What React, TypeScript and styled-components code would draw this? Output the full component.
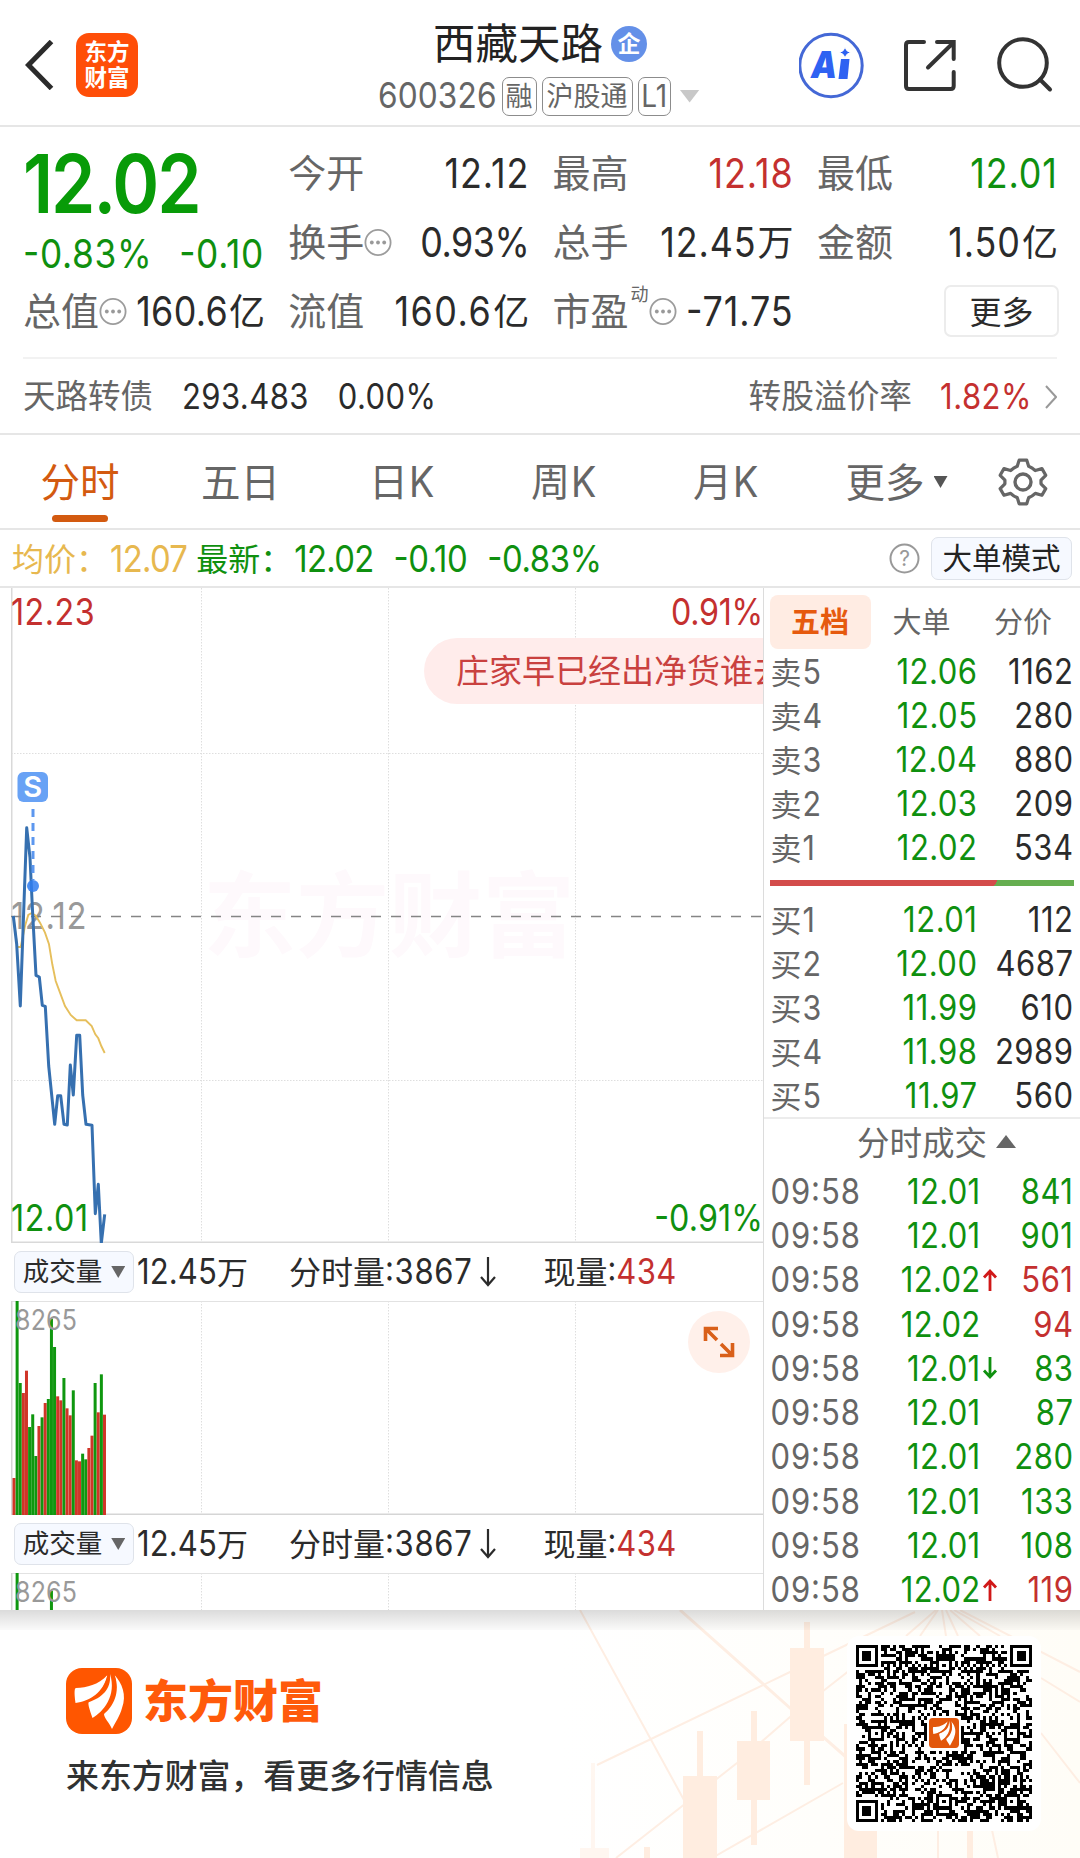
import React from "react";
import styled, { createGlobalStyle } from "styled-components";

const GREEN = "#0f900f";
const RED = "#c4302f";
const INK = "#2b2b2b";
const GREY = "#666";
const CJK = `"Noto Sans CJK SC", sans-serif`;

const Global = createGlobalStyle`
  * { box-sizing: border-box; }
  body { margin: 0; background: #fff; }
`;

const Page = styled.div`
  width: 1080px;
  height: 1858px;
  overflow: hidden;
  display: flex;
  flex-direction: column;
  background: #fff;
  font-family: ${CJK};
`;

/* Tall, slightly condensed numerals; $h is the height of a digit. */
const Num = styled.span<{ $h: number; $c?: string; $w?: number; $ls?: number }>`
  display: inline-block;
  font-family: Inter, sans-serif;
  font-size: ${(p) => (p.$h / 0.727) * 0.885}px;
  font-weight: ${(p) => p.$w ?? 400};
  font-feature-settings: "case";
  letter-spacing: ${(p) => p.$ls ?? 0.5}px;
  line-height: 1;
  transform: scaleY(1.13);
  color: ${(p) => p.$c ?? INK};
  white-space: pre;
`;

const Cn = styled.span<{ $s: number; $c?: string; $w?: number; $ls?: number }>`
  font-size: ${(p) => p.$s}px;
  color: ${(p) => p.$c ?? GREY};
  font-weight: ${(p) => p.$w ?? 400};
  letter-spacing: ${(p) => p.$ls ?? 0}px;
  line-height: 1;
  padding-bottom: 0.12em;
  white-space: nowrap;
`;

/* ---------- header ---------- */
const Header = styled.header`
  height: 127px;
  flex: none;
  display: grid;
  grid-template-columns: 378px 1fr 281px;
  border-bottom: 2px solid #e6e6e6;
`;
const HeaderLeft = styled.div`
  display: flex;
  align-items: center;
  gap: 22px;
  padding: 5px 0 0 24px;
`;
const AppLogo = styled.div`
  width: 62px;
  height: 64px;
  border-radius: 13px;
  background: #ff4e08;
  color: #fff;
  font-size: 22.5px;
  font-weight: 700;
  line-height: 26px;
  text-align: center;
  padding-top: 4px;
`;
const HeaderMid = styled.div`
  display: flex;
  flex-direction: column;
`;
const TitleRow = styled.div`
  display: flex;
  align-items: center;
  gap: 8px;
  height: 48px;
  margin: 20px 0 0 55px;
`;
const Badge = styled.span`
  width: 36px;
  height: 36px;
  border-radius: 50%;
  background: #6490e8;
  color: #fff;
  font-size: 23px;
  font-weight: 700;
  line-height: 33px;
  text-align: center;
`;
const CodeRow = styled.div`
  display: flex;
  align-items: center;
  gap: 5px;
  height: 40px;
  margin-top: 8px;
`;
const Tag = styled.span<{ $w: number }>`
  width: ${(p) => p.$w}px;
  height: 39px;
  border: 1.5px solid #8c8c8c;
  border-radius: 7px;
  display: flex;
  align-items: center;
  justify-content: center;
`;
const HeaderRight = styled.div`
  display: flex;
  align-items: center;
  padding-top: 4px;
`;
const Tri = styled.i<{ $w: number; $h: number; $c: string; $up?: boolean }>`
  display: block;
  width: ${(p) => p.$w}px;
  height: ${(p) => p.$h}px;
  background: ${(p) => p.$c};
  clip-path: ${(p) => (p.$up ? "polygon(50% 0, 100% 100%, 0 100%)" : "polygon(0 0, 100% 0, 50% 100%)")};
`;

/* ---------- quote ---------- */
const Quote = styled.section`
  height: 230px;
  flex: none;
  display: grid;
  grid-template-columns: 241px 240px 240px 240px;
  grid-auto-rows: 69px;
  column-gap: 24.3px;
  padding: 12px 23px 0 23px;
`;
const Price = styled.div`
  display: flex;
  flex-direction: column;
  grid-row: span 2;
`;
const PriceBig = styled.div`
  height: 92px;
  display: flex;
  align-items: center;
`;
const PriceChange = styled.div`
  height: 45px;
  display: flex;
  align-items: center;
  justify-content: space-between;
`;
const Cell = styled.div`
  height: 69px;
  display: flex;
  align-items: center;
`;
const Value = styled.span`
  margin-left: auto;
  margin-right: -1px;
  display: flex;
  align-items: center;
  gap: 1px;
`;
const Sup = styled.sup`
  align-self: flex-start;
  font-size: 18px;
  line-height: 18px;
  color: ${GREY};
  margin: 7px 0 0 2px;
`;
const MoreButton = styled.button`
  margin-left: auto;
  margin-right: -2px;
  margin-bottom: 2px;
  width: 115px;
  height: 52px;
  border: 2px solid #ececec;
  border-radius: 7px;
  background: #fff;
  font-family: inherit;
  padding: 0;
`;
const Bond = styled.section`
  flex: none;
  margin: 0 23px;
  height: 76px;
  border-top: 2px solid #f2f2f2;
  padding-top: 1px;
  display: flex;
  align-items: center;
`;
const Spacer = styled.span<{ $w?: number }>`
  ${(p) => (p.$w ? `width: ${p.$w}px; flex: none;` : "flex: 1;")}
`;

/* ---------- tabs ---------- */
const Tabs = styled.nav`
  height: 97px;
  flex: none;
  border-top: 2px solid #e6e6e6;
  border-bottom: 2px solid #e6e6e6;
  display: grid;
  grid-template-columns: 160px 161px 162px 162px 162px 1fr 114px;
`;
const Tab = styled.div`
  display: flex;
  flex-direction: column;
  align-items: center;
`;
const TabLabel = styled.div`
  height: 80px;
  padding-top: 14px;
  display: flex;
  align-items: center;
  gap: 9px;
`;
const Underline = styled.i`
  width: 56px;
  height: 7px;
  border-radius: 4px;
  background: #d35a10;
`;
const Info = styled.div`
  height: 58px;
  flex: none;
  border-bottom: 2px solid #e6e6e6;
  display: flex;
  align-items: center;
  padding: 1px 8px 0 12px;
`;
const SmallButton = styled.button<{ $w: number; $h: number }>`
  width: ${(p) => p.$w}px;
  height: ${(p) => p.$h}px;
  flex: none;
  border: 1.5px solid #dfe3ea;
  border-radius: 7px;
  background: #f6f9ff;
  font-family: inherit;
  padding: 0;
  display: flex;
  align-items: center;
  justify-content: center;
  gap: 9px;
`;

/* ---------- body ---------- */
const Body = styled.main`
  height: 1022px;
  flex: none;
  display: grid;
  grid-template-columns: 763px 317px;
  overflow: hidden;
`;
const ChartColumn = styled.div`
  height: 1022px;
  overflow: hidden;
`;
const ChartBox = styled.div<{ $h: number }>`
  position: relative;
  margin-left: 11px;
  height: ${(p) => p.$h}px;
  overflow: hidden;
  svg { display: block; position: relative; }
`;
const Corner = styled.span<{ $top: number; $left?: number; $right?: number }>`
  position: absolute;
  line-height: 0;
  top: ${(p) => p.$top}px;
  ${(p) => (p.$left !== undefined ? `left: ${p.$left}px;` : `right: ${p.$right}px;`)}
`;
const Watermark = styled.span`
  position: absolute;
  left: 192px;
  top: 270px;
  font-size: 93px;
  line-height: 104px;
  font-weight: 700;
  color: #fef9fc;
  white-space: nowrap;
`;
const Marquee = styled.div`
  position: absolute;
  top: 50px;
  left: 413px;
  width: 400px;
  height: 66px;
  padding: 1px 0 0 32px;
  border-radius: 33px;
  background: #ffeceb;
  display: flex;
  align-items: center;
`;
const VolumeHead = styled.div`
  height: 58px;
  display: flex;
  align-items: center;
  padding-left: 14px;
`;
const ExpandButton = styled.span`
  position: absolute;
  left: 677px;
  top: 10px;
  width: 62px;
  height: 62px;
  border-radius: 50%;
  background: #fff0ea;
  svg { margin: 15px; }
`;

/* ---------- order book ---------- */
const Side = styled.aside`
  border-left: 1.5px solid #dcdcdc;
  padding-left: 5.5px;
`;
const SideTabs = styled.div`
  display: grid;
  grid-template-columns: 101px 102px 101px;
  padding-top: 7px;
  height: 62px;
`;
const SideTab = styled.div<{ $on?: boolean }>`
  height: 54px;
  border-radius: 8px;
  background: ${(p) => (p.$on ? "#ffece3" : "transparent")};
  display: flex;
  align-items: center;
  justify-content: center;
`;
const BookRow = styled.div`
  height: 44px;
  display: grid;
  grid-template-columns: 70px 137px 96px;
  align-items: center;
  padding-left: 1px;
  & > :nth-child(n + 2) { justify-self: end; }
`;
const Level = styled.span`
  display: flex;
  align-items: center;
  gap: 1px;
`;
const Ratio = styled.div`
  display: flex;
  width: 304px;
  height: 6px;
  margin: 10px 0 12px;
  background: linear-gradient(120deg, #d34c4b 0 74%, #66ae50 74%);
`;
const DealsHead = styled.div`
  height: 52px;
  margin: -1px 0 0 -5.5px;
  padding: 0 0 2px 93px;
  border-top: 2px solid #ececec;
  display: flex;
  align-items: center;
  gap: 9px;
`;
const DealMark = styled(Tri)`
  margin-bottom: 3px;
`;
const DealRow = styled.div`
  height: 44.3px;
  display: grid;
  grid-template-columns: 89px 121px 18px 75px;
  align-items: center;
  padding-left: 1px;
  & > :nth-child(2), & > :nth-child(4) { justify-self: end; }
  & > :nth-child(3) { justify-self: center; }
`;

/* ---------- footer ---------- */
const Footer = styled.footer`
  position: relative;
  height: 248px;
  flex: none;
  display: flex;
  justify-content: space-between;
  background: #fff;
`;
const Backdrop = styled.svg`
  position: absolute;
  inset: 0;
`;
const Shade = styled.div`
  position: absolute;
  left: 0;
  top: 0;
  width: 100%;
  height: 20px;
  background: linear-gradient(rgba(0, 0, 0, 0.14), rgba(0, 0, 0, 0.02));
`;
const Brand = styled.div`
  position: relative;
  padding: 58px 0 0 66px;
`;
const BrandRow = styled.div`
  display: flex;
  align-items: center;
  gap: 11px;
  height: 66px;
  margin-bottom: 24px;
`;
const QrCard = styled.div`
  position: relative;
  margin: 26px 39px 0 0;
  width: 194px;
  height: 195px;
  padding: 9px;
  border-radius: 12px;
  background: #fff;
`;

/* ---------- drawings ---------- */
const MoreDots = () => (
  <svg width="28" height="29" viewBox="0 0 27 29" style={{ flex: "none" }}>
    <circle cx="13.5" cy="14.5" r="12.6" fill="none" stroke="#9c9c9c" strokeWidth="1.8" />
    {[7.3, 13.5, 19.7].map((x) => <circle key={x} cx={x} cy="14.5" r="1.9" fill="#999" />)}
  </svg>
);

const Feather = ({ size, color }: { size: number; color: string }) => (
  <svg width={size} height={size} viewBox="0 0 66 66">
    <rect width="66" height="66" rx={size > 40 ? 16 : 8} fill={color} />
    <g fill="#fff">
      <path d="M41.5 7 C32 17 21 19.5 10 20 C8.500 20 8 24 9.500 35 C24 33 37 25 41.500 7Z" />
      <path d="M44 6 C45.500 22 35 30 23 34 C21.500 35 23 40 26.500 50 C37 44 51 28 44 6Z" />
      <path d="M48.500 7 C56 15 61 27 56 40 C54 48 49 55 46 61 C43 54 38 50 38 46 C47 39 55 24 48.500 7Z" />
    </g>
    <g fill="none" stroke={color} strokeWidth="1.800">
      <path d="M42.500 6C40 22 30 31 18 34.500" />
      <path d="M47.500 6C53 24 45 40 32 48" />
    </g>
  </svg>
);

const Arrow = ({ up, color }: { up?: boolean; color: string }) => (
  <svg width="16" height="24" viewBox="0 0 16 24" style={{ display: "block" }}>
    <path
      d={up ? "M8 23V3M2 9.500L8 3L14 9.500" : "M8 1V21M2 14.500L8 21L14 14.500"}
      fill="none" stroke={color} strokeWidth="2.8"
    />
  </svg>
);

const px = (pts: number[][]) => pts.map(([x, y]) => `${(x / 3 - 11).toFixed(1)},${(y / 3 + 153).toFixed(1)}`).join(" ");
const pricePts = px([
  [40, 525], [50, 610], [61, 795], [80, 260], [90, 350], [98, 520], [108, 703], [118, 708], [127, 793], [136, 796],
  [146, 975], [164, 1150], [173, 1064], [182, 1064], [192, 1150], [202, 1152], [211, 972], [220, 1062], [230, 883],
  [239, 883], [248, 1062], [258, 1150], [276, 1153], [286, 1418], [295, 1330], [304, 1507], [314, 1420],
]);
const avgPts = px([
  [40, 525], [52, 618], [62, 618], [75, 555], [85, 522], [95, 516], [107, 524], [120, 545], [135, 575], [147, 610],
  [157, 670], [167, 720], [180, 755], [195, 795], [212, 822], [230, 838], [257, 838], [275, 855], [286, 880],
  [295, 892], [304, 915], [314, 936],
]);

const PriceChart = () => (
  <ChartBox $h={655}>
    <Watermark>东方财富</Watermark>
    <Corner $top={328} $left={0}><Num $h={27} $c="#999" $ls={0.5} style={{ marginTop: -17 }}>12.12</Num></Corner>
    <svg width="752" height="655">
      <path d="M190.500 0V655M377.500 0V655M564.500 0V655M0 165.500H752M0 492.500H752" stroke="#dedede" strokeDasharray="1.500 1.500" />
      <path d="M.75 0V654.250H752" fill="none" stroke="#d9d9d9" strokeWidth="1.500" />
      <path d="M0 328.500H752" stroke="#858585" strokeWidth="1.700" strokeDasharray="10 10" />
      <polyline points={avgPts} fill="none" stroke="#e6bf5c" strokeWidth="1.900" />
      <polyline points={pricePts} fill="none" stroke="#3670b0" strokeWidth="3" strokeLinejoin="round" />
      <path d="M22 221V292" stroke="#5c97ef" strokeWidth="3" strokeDasharray="8 6" />
      <circle cx="22" cy="298" r="6" fill="#2f7df0" opacity=".85" />
      <rect x="6.500" y="184" width="30.500" height="30" rx="6" fill="#68a2f5" />
      <text x="21.700" y="208.500" textAnchor="middle" fontFamily="Inter" fontWeight="600" fontSize="29" fill="#fff">S</text>
    </svg>
    <Corner $top={9} $left={0}><Num $h={26.500} $c={RED} $ls={0.500}>12.23</Num></Corner>
    <Corner $top={9} $right={0}><Num $h={26.500} $c={RED} $ls={-0.300}>0.91%</Num></Corner>
    <Corner $top={615} $left={0}><Num $h={26.500} $c={GREEN} $ls={0.600}>12.01</Num></Corner>
    <Corner $top={615} $right={0}><Num $h={26.500} $c={GREEN} $ls={0.100}>-0.91%</Num></Corner>
    <Marquee><Cn $s={33} $c="#c9413f">庄家早已经出净货谁去</Cn></Marquee>
  </ChartBox>
);

const BARS: [number, string][] = [
  [743, "r"], [212, "g"], [458, "g"], [488, "r"], [421, "r"], [590, "g"], [552, "g"], [677, "g"], [587, "r"], [561, "g"],
  [518, "r"], [506, "g"], [265, "g"], [350, "g"], [498, "r"], [510, "r"], [443, "g"], [534, "r"], [555, "r"], [480, "g"],
  [690, "r"], [693, "r"], [670, "g"], [687, "g"], [653, "r"], [616, "r"], [458, "g"], [546, "r"], [432, "g"], [553, "r"],
];

const VolumeChart = ({ expand }: { expand?: boolean }) => (
  <ChartBox $h={214}>
    <svg width="752" height="214">
      <path d="M190.500 0V214M377.500 0V214M564.500 0V214" stroke="#dedede" strokeDasharray="1.500 1.500" />
      <path d="M0 .5H752" stroke="#e2e2e2" />
      <path d="M.75 0V213.250H752" fill="none" stroke="#d5d5d5" strokeWidth="1.500" />
      {BARS.map(([top, c], i) => (
        <rect key={i} x={1.500 + i * 3.120} y={(top - 212) / 3} width={3} height={(855 - top) / 3} fill={c === "g" ? "#0f970f" : "#d03528"} />
      ))}
    </svg>
    <Corner $top={7} $left={4}><Num $h={20.500} $c="#999" $ls={0.200}>8265</Num></Corner>
    {expand && (
      <ExpandButton>
        <svg width="32" height="32" fill="none" stroke="#d9601a" strokeWidth="3.600">
          <path d="M2.500 15V2.500H15M2.500 2.500L14 14M29.500 17V29.500H17M29.500 29.500L18 18" />
        </svg>
      </ExpandButton>
    )}
  </ChartBox>
);

const VolumeHeader = () => (
  <VolumeHead>
    <SmallButton $w={120} $h={42}>
      <Cn $s={26.500} $c={INK}>成交量</Cn>
      <Tri $w={14} $h={12} $c="#666" />
    </SmallButton>
    <Spacer $w={3} />
    <Num $h={25.500} $ls={0.100}>12.45</Num><Cn $s={31} $c={INK}>万</Cn>
    <Spacer $w={41} />
    <Cn $s={32} $c={INK}>分时量</Cn><Num $h={25.500} $ls={0.700}>:3867</Num>
    <Spacer $w={6} />
    <svg width="18" height="32" fill="none" stroke={INK} strokeWidth="2.200"><path d="M9 1V29M2 21L9 29L16 21" /></svg>
    <Spacer $w={47} />
    <Cn $s={32} $c={INK}>现量</Cn><Num $h={25} $ls={0}>:</Num><Num $h={25.500} $c={RED} $ls={0.300}>434</Num>
  </VolumeHead>
);

const N = 57;
const inSquare = (x: number, y: number, cx: number, cy: number) => Math.max(Math.abs(x - cx), Math.abs(y - cy));
function moduleOn(x: number, y: number, rnd: number): boolean {
  for (const [cx, cy] of [[3, 3], [53, 3], [3, 53]]) {
    const d = inSquare(x, y, cx, cy);
    if (d <= 4) return d === 3 || d <= 1;
  }
  for (const [cx, cy] of [[28, 6], [6, 28], [50, 28], [28, 50], [50, 50]]) {
    const d = inSquare(x, y, cx, cy);
    if (d <= 2) return d !== 1;
  }
  if (inSquare(x, y, 28, 28) <= 5) return false;
  if (x === 6) return y % 2 === 0;
  if (y === 6) return x % 2 === 0;
  return rnd < 0.5;
}
const qrPath = (() => {
  let seed = 20231;
  let d = "";
  for (let y = 0; y < N; y++)
    for (let x = 0; x < N; x++) {
      seed = (seed * 1103515245 + 12345) % 2147483648;
      if (moduleOn(x, y, seed / 2147483648)) d += `M${x} ${y}h1v1h-1z`;
    }
  return d;
})();

const QrLogo = styled.span`
  position: absolute;
  left: 82px;
  top: 82px;
  width: 30px;
  height: 30px;
`;

const FooterArt = () => (
  <Backdrop width="1080" height="248">
    <defs>
      <linearGradient id="wash" x1="0" x2="1"><stop offset="0" stopColor="#fff" /><stop offset="1" stopColor="#fffdf7" /></linearGradient>
    </defs>
    <rect x="560" width="520" height="248" fill="url(#wash)" />
    <g stroke="#feeee3" strokeWidth="2" fill="none">
      <path d="M580 0L684 190M597 155L790 62L915 2" />
      <path d="M680 0L790 98L846 147" strokeWidth="3" />
      <path d="M616 248L681 197L737 153L790 107L850 60M712 248L843 173" />
      <path d="M960 0L1080 62M1041 68L1080 92M1041 123L1080 173M936 0L906 26M938 0L920 26M942 0L946 26M946 0L958 26M950 0L980 26M954 0L1000 26M938 220V248M992 220L998 248" />
    </g>
    <g fill="#ffede0">
      <rect x="804" y="12" width="6" height="163" /><rect x="790" y="38" width="34" height="93" />
      <rect x="751" y="101" width="6" height="134" /><rect x="737" y="131" width="33" height="59" />
      <rect x="697" y="121" width="6" height="50" /><rect x="683" y="166" width="34" height="82" />
      <rect x="844" y="114" width="33" height="134" /><rect x="644" y="237" width="6" height="11" /><rect x="967" y="215" width="6" height="33" />
      <g opacity=".45"><rect x="591" y="153" width="4" height="85" /><rect x="580" y="238" width="29" height="10" /></g>
    </g>
  </Backdrop>
);

const Stat = ({ label, value, unit, color, dots, sup, ls }: { label: string; value: string; unit?: string; color?: string; dots?: boolean; sup?: string; ls?: number }) => (
  <Cell>
    <Cn $s={38}>{label}</Cn>
    {sup && <Sup>{sup}</Sup>}
    {dots && <MoreDots />}
    <Value>
      <Num $h={29.500} $c={color} $ls={ls ?? 0.9}>{value}</Num>
      {unit && <Cn $s={36} $c={INK}>{unit}</Cn>}
    </Value>
  </Cell>
);

const SELL = [["5", "12.06", "1162"], ["4", "12.05", "280"], ["3", "12.04", "880"], ["2", "12.03", "209"], ["1", "12.02", "534"]];
const BUY = [["1", "12.01", "112"], ["2", "12.00", "4687"], ["3", "11.99", "610"], ["4", "11.98", "2989"], ["5", "11.97", "560"]];
const DEALS: [string, string, string, string][] = [
  ["12.01", "", "841", GREEN], ["12.01", "", "901", GREEN], ["12.02", "up", "561", RED], ["12.02", "", "94", RED],
  ["12.01", "down", "83", GREEN], ["12.01", "", "87", GREEN], ["12.01", "", "280", GREEN], ["12.01", "", "133", GREEN],
  ["12.01", "", "108", GREEN], ["12.02", "up", "119", RED],
];

const Book = ({ side, rows }: { side: string; rows: string[][] }) => (
  <>
    {rows.map(([n, price, vol]) => (
      <BookRow key={n}>
        <Level><Cn $s={31}>{side}</Cn><Num $h={25} $c={GREY}>{n}</Num></Level>
        <Num $h={25.500} $c={GREEN}>{price}</Num>
        <Num $h={25.500}>{vol}</Num>
      </BookRow>
    ))}
  </>
);

const KTab = ({ c }: { c: string }) => (
  <Tab><TabLabel style={{ gap: 1 }}><Cn $s={39}>{c}</Cn><Num $h={31} $c={GREY}>K</Num></TabLabel></Tab>
);

export default function App() {
  return (
    <Page>
      <Global />
      <Header>
        <HeaderLeft>
          <svg width="30" height="50" fill="none" stroke="#2b2b2b" strokeWidth="5"><path d="M27.500 1.500L4.500 25L27.500 48.500" /></svg>
          <AppLogo>东方<br />财富</AppLogo>
        </HeaderLeft>
        <HeaderMid>
          <TitleRow><Cn $s={42.500} $c="#222">西藏天路</Cn><Badge>企</Badge></TitleRow>
          <CodeRow>
            <Num $h={26} $c={GREY} $ls={0.100}>600326</Num>
            <Tag $w={35}><Cn $s={27}>融</Cn></Tag>
            <Tag $w={91}><Cn $s={27}>沪股通</Cn></Tag>
            <Tag $w={33}><Num $h={23} $c={GREY} $ls={0}>L1</Num></Tag>
            <Tri $w={20} $h={13} $c="#c8c8c8" style={{ marginLeft: 4 }} />
          </CodeRow>
        </HeaderMid>
        <HeaderRight>
          <svg width="281" height="72" fill="none">
            <circle cx="32" cy="36.500" r="31.200" stroke="#4468d6" strokeWidth="3" />
            <text x="12" y="48.500" fontFamily="Inter" fontWeight="900" fontStyle="italic" fontSize="37" textLength="26" lengthAdjust="spacingAndGlyphs" fill="#2f62f2">A</text>
            <path d="M42 30H50.500L48.500 50H39.500Z" fill="#2f62f2" />
            <path d="M46 18Q47 22.500 51.500 23.500Q47 24.500 46 29Q45 24.500 40.500 23.500Q45 22.500 46 18Z" fill="#2f62f2" stroke="#fff" strokeWidth="1" />
            <g stroke="#333" strokeWidth="4" strokeLinecap="round">
              <path d="M125 13H110Q107 13 107 16V57Q107 60 110 60H151.700Q154.700 60 154.700 57V43" />
              <path d="M138 13H154.700V30M153.500 14.500L129 38.500" />
              <circle cx="224" cy="34" r="23.800" /><path d="M241 50.500L251 60.500" />
            </g>
          </svg>
        </HeaderRight>
      </Header>

      <Quote>
        <Price>
          <PriceBig><Num $h={58.500} $c="#089b08" $w={600} $ls={-2}>12.02</Num></PriceBig>
          <PriceChange><Num $h={29} $c={GREEN} $ls={0.700}>-0.83%</Num><Num $h={29} $c={GREEN} $ls={0.700}>-0.10</Num></PriceChange>
        </Price>
        <Stat label="今开" value="12.12" />
        <Stat label="最高" value="12.18" color={RED} />
        <Stat label="最低" value="12.01" color={GREEN} />
        <Stat label="换手" value="0.93%" dots ls={-0.500} />
        <Stat label="总手" value="12.45" unit="万" />
        <Stat label="金额" value="1.50" unit="亿" />
        <Stat label="总值" value="160.6" unit="亿" dots ls={0.300} />
        <Stat label="流值" value="160.6" unit="亿" ls={1.500} />
        <Stat label="市盈" value="-71.75" sup="动" dots />
        <Cell><MoreButton><Cn $s={32} $c={INK}>更多</Cn></MoreButton></Cell>
      </Quote>
      <Bond>
        <Cn $s={32.500}>天路转债</Cn><Spacer $w={29} />
        <Num $h={25.500} $ls={0.400}>293.483</Num><Spacer $w={29} />
        <Num $h={25.500} $ls={0.400}>0.00%</Num><Spacer />
        <Cn $s={32.700}>转股溢价率</Cn><Spacer $w={28} />
        <Num $h={25.500} $c={RED}>1.82%</Num><Spacer $w={13} />
        <svg width="12" height="24" fill="none" stroke="#999" strokeWidth="2"><path d="M1 1L11 12L1 23" /></svg>
      </Bond>

      <Tabs>
        <Tab><TabLabel><Cn $s={39.500} $c="#d35a10">分时</Cn></TabLabel><Underline /></Tab>
        <Tab><TabLabel><Cn $s={39.500}>五日</Cn></TabLabel></Tab>
        <KTab c="日" />
        <KTab c="周" />
        <KTab c="月" />
        <Tab><TabLabel style={{ marginLeft: 20 }}><Cn $s={39.500}>更多</Cn><Tri $w={14} $h={12} $c="#555" /></TabLabel></Tab>
        <Tab>
          <TabLabel>
            <svg width="50" height="50" fill="none" stroke="#666" strokeWidth="3.400" strokeLinejoin="round">
              <circle cx="25" cy="25" r="8" />
              <path d="M21 2H29L31 8.500Q35 10 38 13L45 11L49 18L44 23V27L49 32L45 39L38 37Q35 40 31 41.500L29 48H21L19 41.500Q15 40 12 37L5 39L1 32L6 27V23L1 18L5 11L12 13Q15 10 19 8.500Z" transform="translate(1.200 1.200) scale(.95)" />
            </svg>
          </TabLabel>
        </Tab>
      </Tabs>
      <Info>
        <Cn $s={32} $c="#e7b84f">均价：</Cn><Spacer $w={2} />
        <Num $h={27} $c="#e7b84f" $ls={-0.700}>12.07</Num><Spacer $w={9} />
        <Cn $s={32} $c={GREEN}>最新：</Cn><Spacer $w={2} />
        <Num $h={27} $c={GREEN} $ls={-0.700}>12.02</Num><Spacer $w={20} />
        <Num $h={27} $c={GREEN} $ls={-0.400}>-0.10</Num><Spacer $w={20} />
        <Num $h={27} $c={GREEN} $ls={-0.400}>-0.83%</Num><Spacer />
        <svg width="31" height="31">
          <circle cx="15.500" cy="15.500" r="14" fill="none" stroke="#999" strokeWidth="2" />
          <text x="15.500" y="23" textAnchor="middle" fontFamily="Inter" fontSize="21" fill="#999">?</text>
        </svg>
        <Spacer $w={11} />
        <SmallButton $w={141} $h={43}><Cn $s={29.500} $c="#222">大单模式</Cn></SmallButton>
      </Info>

      <Body>
        <ChartColumn>
          <PriceChart />
          <VolumeHeader />
          <VolumeChart expand />
          <VolumeHeader />
          <VolumeChart />
        </ChartColumn>
        <Side>
          <SideTabs>
            <SideTab $on><Cn $s={29} $c="#e65a0e" $w={700}>五档</Cn></SideTab>
            <SideTab><Cn $s={29}>大单</Cn></SideTab>
            <SideTab><Cn $s={29}>分价</Cn></SideTab>
          </SideTabs>
          <Book side="卖" rows={SELL} />
          <Ratio />
          <Book side="买" rows={BUY} />
          <DealsHead><Cn $s={32.500}>分时成交</Cn><DealMark $w={20} $h={13} $c="#666" $up /></DealsHead>
          {DEALS.map(([price, dir, vol, color], i) => (
            <DealRow key={i}>
              <Num $h={25.500} $c={GREY} $ls={0.900}>09:58</Num>
              <Num $h={25.500} $c={GREEN} $ls={0.300}>{price}</Num>
              <span>{dir && <Arrow up={dir === "up"} color={dir === "up" ? "#d01818" : GREEN} />}</span>
              <Num $h={25.500} $c={color}>{vol}</Num>
            </DealRow>
          ))}
        </Side>
      </Body>

      <Footer>
        <FooterArt />
        <Shade />
        <Brand>
          <BrandRow>
            <Feather size={66} color="#ff5600" />
            <Cn $s={45} $c="#ff5a0a" $w={900}>东方财富</Cn>
          </BrandRow>
          <Cn $s={32.900} $c="#303232" $w={500}>来东方财富，看更多行情信息</Cn>
        </Brand>
        <QrCard>
          <svg width="176" height="177" viewBox="0 0 57 57" preserveAspectRatio="none" shapeRendering="crispEdges"><path d={qrPath} /></svg>
          <QrLogo><Feather size={30} color="#e2570c" /></QrLogo>
        </QrCard>
      </Footer>
    </Page>
  );
}
